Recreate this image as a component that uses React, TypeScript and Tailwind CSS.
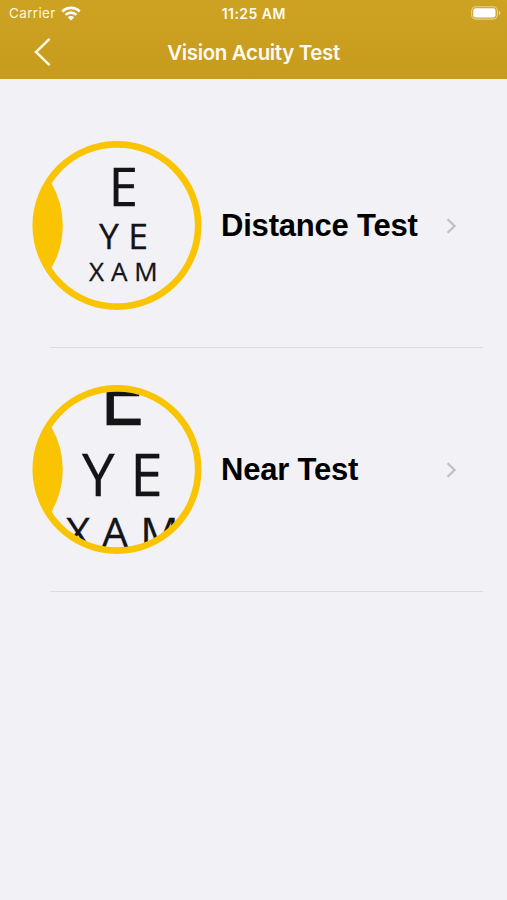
type Glyph = { char: string; x: number };
type ChartLine = { size: number; y: number; glyphs: Glyph[] };

const distanceChart: ChartLine[] = [
  { size: 52.7, y: 65, glyphs: [{ char: "E", x: 76.8 }] },
  { size: 35.5, y: 108, glyphs: [{ char: "Y", x: 67 }, { char: "E", x: 96.2 }] },
  {
    size: 26,
    y: 139.7,
    glyphs: [{ char: "X", x: 57 }, { char: "A", x: 79 }, { char: "M", x: 102.2 }],
  },
];

const nearChart: ChartLine[] = [
  { size: 85, y: 40.3, glyphs: [{ char: "E", x: 66.4 }] },
  { size: 58.3, y: 111, glyphs: [{ char: "Y", x: 50 }, { char: "E", x: 98.3 }] },
  {
    size: 42.7,
    y: 162.8,
    glyphs: [{ char: "X", x: 33.7 }, { char: "A", x: 69.5 }, { char: "M", x: 108.2 }],
  },
];

function EyeChart({ id, lines }: { id: string; lines: ChartLine[] }) {
  return (
    <svg viewBox="0 0 170 170" className="size-[170px] shrink-0">
      <clipPath id={id}>
        <circle cx="85" cy="84.5" r="80" />
      </clipPath>
      <g
        clipPath={`url(#${id})`}
        fill="#141416"
        stroke="#141416"
        strokeWidth="0.3"
        className="font-['Open_Sans','Noto_Sans',sans-serif]"
      >
        {lines.map((line) => (
          <text key={line.size} y={line.y} fontSize={line.size}>
            {line.glyphs.map((g) => (
              <tspan key={g.char} x={g.x}>
                {g.char}
              </tspan>
            ))}
          </text>
        ))}
      </g>
      {/* lens on the left side of the eye */}
      <path d="M19.5 42.2A85 85 0 0 1 19.5 126.8L16 129A82 82 0 0 1 16 40Z" fill="#fac402" />
      <circle cx="85" cy="84.5" r="81.2" fill="none" stroke="#fac402" strokeWidth="6.7" />
    </svg>
  );
}

function StatusBar() {
  return (
    <div className="grid h-[27px] grid-cols-3 items-center pl-[9px] pr-[6px] text-[13.5px] leading-none">
      <div className="flex items-center gap-[5px]">
        <span className="pt-px tracking-[0.35px] text-[#fff6da]">Carrier</span>
        <svg width="20" height="15" viewBox="0 0 20 15" fill="none" stroke="#fff" strokeWidth="2.7" className="mb-px">
          <path d="M1.3 5.5a12.4 12.4 0 0 1 17.4 0" />
          <path d="M4.6 8.9a7.7 7.7 0 0 1 10.8 0" />
          <path d="M10 14.4 6.8 11.2a4.6 4.6 0 0 1 6.4 0Z" fill="#fff" stroke="none" />
        </svg>
      </div>
      <span className="whitespace-nowrap pr-[2.5px] pt-px text-center text-[14px] font-semibold tracking-[0.45px]">
        11:25 AM
      </span>
      <svg width="30" height="14" viewBox="0 0 30 14" className="mb-px justify-self-end">
        <rect x="0.7" y="0.7" width="25.6" height="12.4" rx="4" fill="none" stroke="#e7d190" strokeWidth="1.1" />
        <rect x="2.3" y="2.3" width="22.2" height="9.2" rx="2.2" fill="#fff" />
        <path d="M27.8 4.8a2.3 2.3 0 0 1 0 4.4Z" fill="#e7d190" />
      </svg>
    </div>
  );
}

function TestRow({ id, label, lines }: { id: string; label: string; lines: ChartLine[] }) {
  return (
    <li>
      <button className="flex h-[243px] w-full items-center pl-8 pr-[50px] text-left">
        <EyeChart id={id} lines={lines} />
        <span className="ml-[19px] grow whitespace-nowrap font-['Liberation_Sans',Arial,sans-serif] text-[31px] font-bold leading-none tracking-[-0.2px] text-black">
          {label}
        </span>
        <svg width="11" height="16" viewBox="0 0 11 16" fill="none" stroke="#bfbfc4" strokeWidth="2.2">
          <path d="M1.6 1.2 8.6 8l-7 6.8" />
        </svg>
      </button>
      <div className="ml-[50px] mr-6 h-px bg-[#dddde1]" />
    </li>
  );
}

export default function App() {
  return (
    <div className="min-h-[900px] w-full bg-[#f1f1f6] font-['Inter','Liberation_Sans',sans-serif]">
      <header className="h-[79px] bg-gradient-to-b from-[#cda323] to-[#c79b1b] text-[#fffaf0]">
        <StatusBar />
        <div className="grid h-[50px] grid-cols-[1fr_auto_1fr] items-center">
          <button className="ml-[33px] w-5" aria-label="Back">
            <svg width="20" height="30" viewBox="0 0 20 30" fill="none" stroke="#fff8e2" strokeWidth="2.5">
              <path d="M16.6 1.8 3 15l13.6 13.2" />
            </svg>
          </button>
          <h1 className="pt-[3px] text-[20.5px] font-semibold leading-none tracking-[-0.35px]">Vision Acuity Test</h1>
        </div>
      </header>
      <ul className="pt-[25px]">
        <TestRow id="distance-eye" label="Distance Test" lines={distanceChart} />
        <TestRow id="near-eye" label="Near Test" lines={nearChart} />
      </ul>
    </div>
  );
}
